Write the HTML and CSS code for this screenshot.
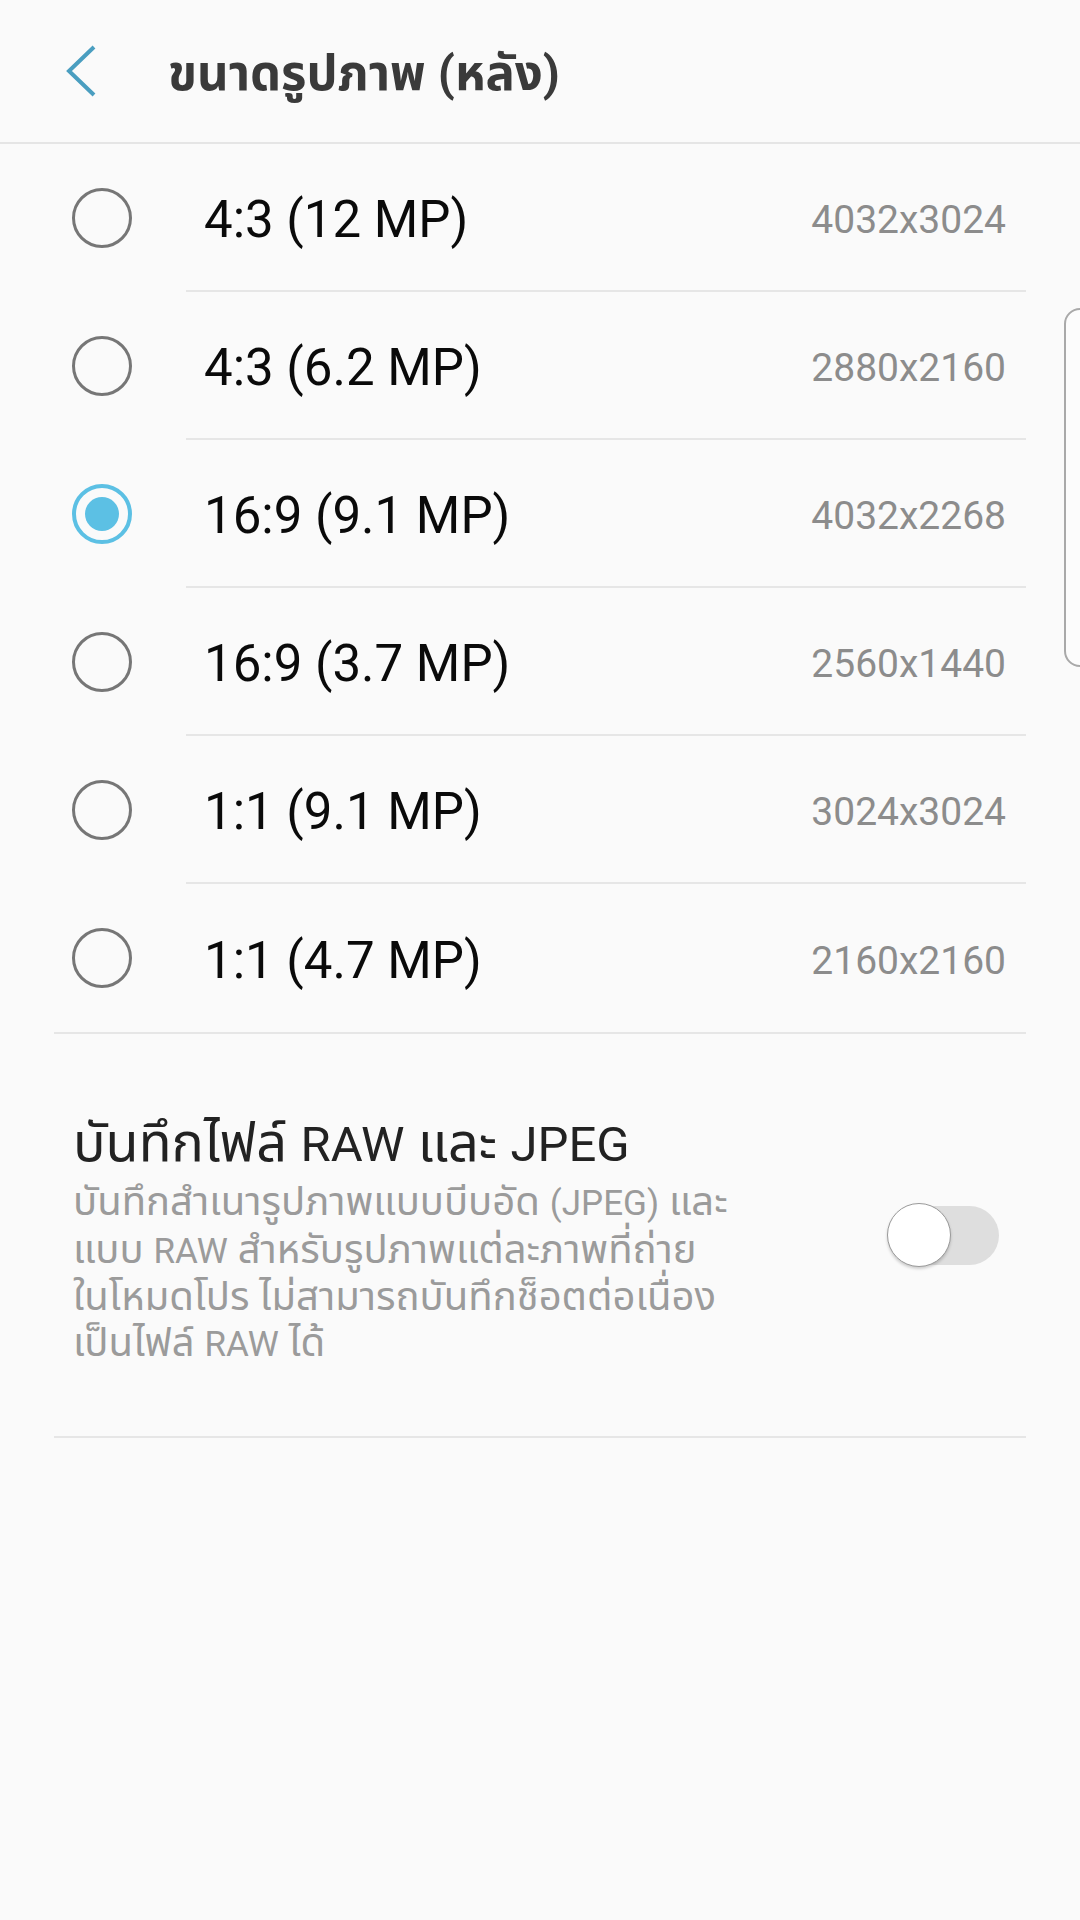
FILE: index.html
```html
<!DOCTYPE html>
<html lang="th">
<head>
<meta charset="utf-8">
<title>ขนาดรูปภาพ (หลัง)</title>
<link rel="stylesheet" href="styles.css">
</head>
<body>
<div class="screen">
  <header class="appbar">
    <svg class="back" width="40" height="56" viewBox="0 0 40 56">
      <polyline points="33,4 8,28 33,52" fill="none" stroke="#4a9ec0" stroke-width="4"/>
    </svg>
    <h1 class="title">ขนาดรูปภาพ (หลัง)</h1>
  </header>

  <div class="list">
    <div class="row"><span class="radio"></span><div class="cell"><span class="label">4:3 (12 MP)</span><span class="value">4032x3024</span></div></div>
    <div class="row"><span class="radio"></span><div class="cell"><span class="label">4:3 (6.2 MP)</span><span class="value">2880x2160</span></div></div>
    <div class="row"><span class="radio on"></span><div class="cell"><span class="label">16:9 (9.1 MP)</span><span class="value">4032x2268</span></div></div>
    <div class="row"><span class="radio"></span><div class="cell"><span class="label">16:9 (3.7 MP)</span><span class="value">2560x1440</span></div></div>
    <div class="row"><span class="radio"></span><div class="cell"><span class="label">1:1 (9.1 MP)</span><span class="value">3024x3024</span></div></div>
    <div class="row last"><span class="radio"></span><div class="cell"><span class="label">1:1 (4.7 MP)</span><span class="value">2160x2160</span></div></div>
  </div>

  <section class="setting">
    <div class="texts">
      <div class="stitle">บันทึกไฟล์ <span class="en">RAW</span> และ <span class="en">JPEG</span></div>
      <div class="sdesc">บันทึกสำเนารูปภาพแบบบีบอัด <span class="en">(JPEG)</span> และ<br>แบบ <span class="en">RAW</span> สำหรับรูปภาพแต่ละภาพที่ถ่าย<br>ในโหมดโปร ไม่สามารถบันทึกช็อตต่อเนื่อง<br>เป็นไฟล์ <span class="en">RAW</span> ได้</div>
    </div>
    <div class="switch"><span class="track"></span><span class="thumb"></span></div>
  </section>

  <div class="edge-handle"></div>
</div>
</body>
</html>
```

FILE: styles.css
```css
html, body {
  margin: 0;
  padding: 0;
  background: #fafafa;
}
.screen {
  position: relative;
  width: 1080px;
  height: 1920px;
  overflow: hidden;
  background: #fafafa;
  font-family: Roboto, "Noto Sans Thai", "Noto Sans", "Liberation Sans", sans-serif;
}
.appbar {
  height: 142px;
  border-bottom: 2px solid #e5e5e5;
  display: flex;
  align-items: center;
  padding-left: 61px;
  box-sizing: content-box;
}
.back {
  display: block;
  flex: none;
}
.title {
  margin: 5px 0 0 67px;
  font-size: 49px;
  font-weight: 700;
  color: #3a3a3a;
  line-height: 1;
}
.list {
  padding: 0 54px;
}
.row {
  display: flex;
  align-items: stretch;
  height: 148px;
}
.radio {
  flex: none;
  align-self: center;
  width: 60px;
  height: 60px;
  box-sizing: border-box;
  border: 3px solid #767676;
  border-radius: 50%;
  margin-left: 18px;
  margin-right: 54px;
  position: relative;
}
.radio.on {
  border: 4px solid #5cc0e4;
}
.radio.on::after {
  content: "";
  position: absolute;
  left: 9px;
  top: 9px;
  width: 34px;
  height: 34px;
  border-radius: 50%;
  background: #5cc0e4;
}
.cell {
  flex: 1;
  display: flex;
  align-items: center;
  justify-content: space-between;
  border-bottom: 2px solid #e6e6e6;
  padding: 5px 20px 0 18px;
}
.row.last .cell {
  border-bottom: none;
}
.label {
  font-size: 51px;
  color: #0a0a0a;
}
.value {
  font-size: 39px;
  color: #8c8c8c;
}
.setting {
  margin: 0 54px;
  border-top: 2px solid #e6e6e6;
  border-bottom: 2px solid #e6e6e6;
  height: 406px;
  display: flex;
  align-items: center;
  justify-content: space-between;
  padding-left: 19px;
  box-sizing: border-box;
}
.texts {
  padding-top: 12px;
}
.stitle {
  font-size: 54px;
  color: #222;
  line-height: 56px;
  margin-bottom: 6px;
}
.stitle .en {
  font-size: 49px;
}
.sdesc {
  font-size: 40px;
  line-height: 45.5px;
  color: #9b9b9b;
}
.sdesc .en {
  font-size: 35px;
}
.switch {
  position: relative;
  width: 112px;
  height: 64px;
  margin-right: 27px;
  flex: none;
}
.track {
  position: absolute;
  right: 0;
  top: 3px;
  width: 94px;
  height: 59px;
  border-radius: 30px;
  background: #dedede;
}
.thumb {
  position: absolute;
  left: 0;
  top: 0;
  width: 64px;
  height: 64px;
  box-sizing: border-box;
  border-radius: 50%;
  background: #fff;
  border: 1.5px solid #9a9a9a;
  box-shadow: 0 2px 3px rgba(0,0,0,0.18);
}
.edge-handle {
  position: absolute;
  left: 1064px;
  top: 308px;
  width: 40px;
  height: 359px;
  box-sizing: border-box;
  border: 2px solid #a9a9a9;
  border-radius: 16px;
  background: #fcfcfc;
}
```
